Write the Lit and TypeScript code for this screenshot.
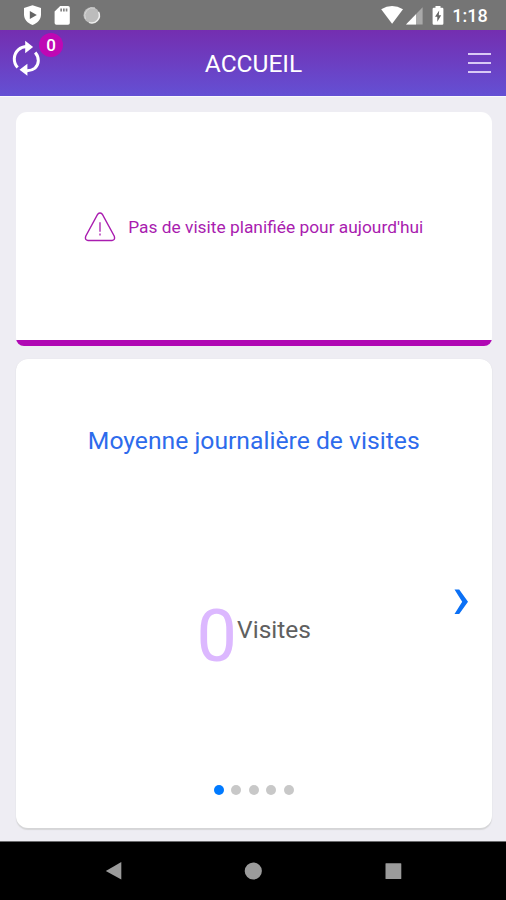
import { LitElement, html, css } from "lit";
import { customElement, property, state } from "lit/decorators.js";
import { classMap } from "lit/directives/class-map.js";

@customElement("status-bar")
class StatusBar extends LitElement {
  static styles = css`
    :host { display: block; height: 30px; background: #757575; color: #fff; }
    .bar { display: flex; height: 30px; }
    svg { display: block; flex: none; }
    .time {
      width: 42px;
      flex: none;
      text-align: center;
      margin: 0 15px 0 3px;
      font: 500 18px/32px Roboto, sans-serif;
      white-space: nowrap;
    }
    .gap { flex: 1; }
  `;
  render() {
    return html`<div class="bar">
      <svg width="110" height="30" viewBox="0 0 110 30">
        <path fill="#fff" d="M32.500 5.200 41 8v6.500c0 5-3.600 8.800-8.500 10.500C27.600 23.300 24 19.500 24 14.500V8Z"/>
        <path fill="#656565" d="M29.800 11v8l7-4Z"/>
        <path fill="#fff" d="M60.200 6H68q1.800 0 1.800 1.800V23q0 1.800-1.800 1.800H56.400q-1.800 0-1.800-1.800V11.600Z"/>
        <path fill="#858585" d="M60.300 8.500h1.700v3h-1.700zm2.700 0h1.700v3h-1.700zm2.700 0h1.700v3h-1.700z"/>
        <circle cx="91.500" cy="15.200" r="8" fill="#bcbcbc"/>
        <path d="M98.600 12a7.600 7.600 0 0 1-9.500 10.400" fill="none" stroke="#eee" stroke-width="1.500"/>
        <path d="M85.500 19a8 8 0 0 1 9.500-11" fill="none" stroke="#d6d6d6" stroke-width="1"/>
      </svg>
      <span class="gap"></span>
      <svg width="66" height="30" viewBox="380 0 66 30">
        <path fill="#fff" d="M381.200 9.300q10.800-6.600 21.800 0L392.100 23.800Z"/>
        <path fill="#a9a9a9" d="M422.600 7.300v17.200H406Z"/>
        <path fill="#fff" d="M416 14.200v10.300h-10Z"/>
        <path fill="#fff" d="M435.500 6h5v1.700h1.700q1.200 0 1.200 1.200v14.600q0 1.200-1.200 1.200h-8.400q-1.200 0-1.200-1.200V8.900q0-1.200 1.200-1.200h1.700Z"/>
        <path fill="#666" d="M439.200 10.500l-4.200 6.200h2.300v5l3.900-6.500h-2.400Z"/>
      </svg>
      <span class="time">1:18</span>
    </div>`;
  }
}

@customElement("app-header")
class AppHeader extends LitElement {
  @property() heading = "";
  @property({ type: Number }) pending = 0;
  static styles = css`
    :host { display: block; height: 66px; }
    header {
      display: grid;
      grid-template-columns: 81px 1fr 80px;
      height: 66px;
      color: #fff;
      background: linear-gradient(#742eb0, #6450d4);
    }
    .sync { position: relative; }
    svg { display: block; }
    .badge {
      position: absolute;
      left: 39px;
      top: 3px;
      width: 24px;
      height: 24px;
      border-radius: 50%;
      background: #bf08b4;
      font: 500 17px/25px Roboto, sans-serif;
      text-align: center;
    }
    h1 {
      margin: 0;
      text-align: center;
      font: 400 24.500px/68px Roboto, sans-serif;
    }
    .menu {
      display: flex;
      flex-direction: column;
      gap: 7px;
      align-self: start;
      justify-self: end;
      margin: 23px 15px 0 0;
    }
    .line { width: 23px; height: 2px; background: #d9c9f5; }
  `;
  render() {
    return html`<header>
      <div class="sync">
        <svg width="50" height="66" viewBox="0 30 50 66">
          <g fill="none" stroke="#fff" stroke-width="3">
            <path d="M17.600 67.600C13 62.500 13.200 54.500 18.200 49.800Q21.800 46.600 27 46.600"/>
            <path d="M35.200 52.400C39.600 57.500 39.200 64.300 35 68.200Q31.500 71 26.500 70.800"/>
          </g>
          <path fill="#fff" d="M25.200 40.800l7.900 6.200-7.900 6.200ZM27.400 63.800l-7.900 6 7.900 5.900Z"/>
        </svg>
        <span class="badge">${this.pending}</span>
      </div>
      <h1>${this.heading}</h1>
      <div class="menu">
        <span class="line"></span><span class="line"></span><span class="line"></span>
      </div>
    </header>`;
  }
}

@customElement("visit-notice")
class VisitNotice extends LitElement {
  static styles = css`
    :host { display: block; }
    .card {
      box-sizing: border-box;
      height: 234px;
      border-radius: 11px 11px 8px 8px;
      background: linear-gradient(#b008b4, #b008b4) bottom / 100% 6px no-repeat #fff;
      display: flex;
      align-items: center;
      justify-content: center;
      gap: 12px;
      padding-bottom: 4px;
      color: #a91caf;
      font: 400 17.350px/24px Roboto, sans-serif;
      white-space: nowrap;
    }
    svg { display: block; flex: none; }
  `;
  render() {
    return html`<div class="card">
      <svg width="32" height="30" viewBox="0 0 32 30" fill="none" stroke="currentColor">
        <path stroke-width="1.400" d="M13.700 2.200Q16 -.3 18.300 2.200L30.300 24.200Q31.500 28.200 28 28.500H4Q.5 28.200 1.700 24.200Z"/>
        <path stroke-width="1.300" d="M16 10.200v9.500M16 21.500v2"/>
      </svg>
      <span>Pas de visite planifiée pour aujourd'hui</span>
    </div>`;
  }
}

@customElement("stats-carousel")
class StatsCarousel extends LitElement {
  @state() private active = 0;
  private slides = [0, 1, 2, 3, 4];
  static styles = css`
    :host { display: block; }
    .card {
      box-sizing: border-box;
      height: 469px;
      border-radius: 12px;
      background: #fff;
      box-shadow: 0 1.500px 1px #d5d5d7, 0 0 1px #dedee2;
      display: grid;
      grid-template-rows: 164px 229px 76px;
      font-family: Roboto, sans-serif;
    }
    h2 {
      margin: 0;
      text-align: center;
      font-weight: 400;
      font-size: 24.700px;
      line-height: 164px;
      color: #2d6bec;
    }
    .body {
      display: grid;
      grid-template-columns: 60px 1fr 60px;
    }
    .value {
      display: flex;
      justify-content: center;
      align-items: flex-start;
      padding-top: 69px;
    }
    .number { font-size: 72px; line-height: 90px; color: #dcb8ff; }
    .unit { font-size: 24.500px; line-height: 75px; color: #606060; }
    .next {
      border: 0;
      padding: 0;
      background: none;
      width: 16px;
      height: 26px;
      margin: 66px 0 0 20.500px;
    }
    svg { display: block; }
    .dots { display: flex; justify-content: center; gap: 7.400px; padding-top: 33px; }
    .dot { width: 10px; height: 10px; border-radius: 50%; background: #c8c8c8; }
    .dot.on { background: #007aff; }
  `;
  render() {
    return html`<section class="card">
      <h2>Moyenne journalière de visites</h2>
      <div class="body">
        <span></span>
        <div class="value">
          <span class="number">0</span><span class="unit">Visites</span>
        </div>
        <button class="next" aria-label="Suivant" @click=${() => (this.active = (this.active + 1) % 5)}>
          <svg width="16" height="26" viewBox="0 0 16 26">
            <path fill="#0b70f5" d="M1.500.5h4.700L15 12.800 6.200 25H1.500L9.200 12.800Z"/>
          </svg>
        </button>
      </div>
      <div class="dots">
        ${this.slides.map((i) => html`<span class=${classMap({ dot: true, on: i === this.active })}></span>`)}
      </div>
    </section>`;
  }
}

@customElement("nav-bar")
class NavBar extends LitElement {
  static styles = css`
    :host { display: block; height: 59px; }
    .nav {
      box-sizing: border-box;
      height: 59px;
      border-top: 1px solid #6b6b6d;
      background: #000;
      display: flex;
      justify-content: center;
      gap: 122px;
      padding-top: 20px;
    }
    svg { display: block; }
  `;
  render() {
    return html`<div class="nav">
      <svg width="18" height="18" viewBox="0 0 18 18"><path fill="#9b9b9b" d="M17.300 0v17.500L1.800 9Z"/></svg>
      <svg width="18" height="18" viewBox="0 0 18 18"><circle cx="9.300" cy="9" r="8.600" fill="#9b9b9b"/></svg>
      <svg width="18" height="18" viewBox="0 0 18 18"><rect x="1.500" y="1.200" width="15.800" height="15.800" rx=".6" fill="#9b9b9b"/></svg>
    </div>`;
  }
}

@customElement("app-root")
class AppRoot extends LitElement {
  static styles = css`
    :host { display: block; }
    .screen {
      display: flex;
      flex-direction: column;
      height: 900px;
      background: #eeedf3;
      overflow: hidden;
    }
    main {
      flex: 1;
      display: flex;
      flex-direction: column;
      gap: 13px;
      padding: 15px 14px 0 15.500px;
      border-top: 1px solid #f9f9fd;
    }
  `;
  render() {
    return html`<div class="screen">
      <status-bar></status-bar>
      <app-header heading="ACCUEIL" .pending=${0}></app-header>
      <main>
        <visit-notice></visit-notice>
        <stats-carousel></stats-carousel>
      </main>
      <nav-bar></nav-bar>
    </div>`;
  }
}
